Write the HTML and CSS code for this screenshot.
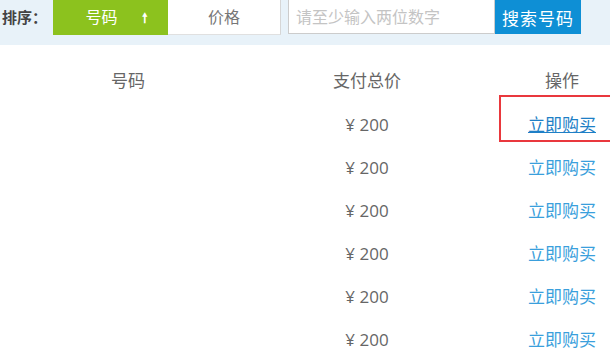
FILE: index.html
```html
<!DOCTYPE html>
<html lang="zh-CN">
<head>
	<meta charset="UTF-8">
	<title>号码列表</title>
	<link rel="stylesheet" href="styles.css">
</head>
<body>
	<div class="toolbar">
		<span class="sort-label">排序：</span>
		<a class="sort-btn active" href="#">号码<span class="arrow">&#129045;</span></a>
		<a class="sort-btn" href="#">价格</a>
		<input class="search-input" type="text" placeholder="请至少输入两位数字">
		<button class="search-btn">搜索号码</button>
	</div>
	<div class="list">
		<div class="row head">
			<div class="col-num">号码</div>
			<div class="col-price">支付总价</div>
			<div class="col-op">操作</div>
		</div>
		<div class="row">
			<div class="col-num"></div>
			<div class="col-price">¥ 200</div>
			<div class="col-op marked"><a class="buy current" href="#">立即购买</a><span class="mark"></span></div>
		</div>
		<div class="row">
			<div class="col-num"></div>
			<div class="col-price">¥ 200</div>
			<div class="col-op"><a class="buy" href="#">立即购买</a></div>
		</div>
		<div class="row">
			<div class="col-num"></div>
			<div class="col-price">¥ 200</div>
			<div class="col-op"><a class="buy" href="#">立即购买</a></div>
		</div>
		<div class="row">
			<div class="col-num"></div>
			<div class="col-price">¥ 200</div>
			<div class="col-op"><a class="buy" href="#">立即购买</a></div>
		</div>
		<div class="row">
			<div class="col-num"></div>
			<div class="col-price">¥ 200</div>
			<div class="col-op"><a class="buy" href="#">立即购买</a></div>
		</div>
		<div class="row">
			<div class="col-num"></div>
			<div class="col-price">¥ 200</div>
			<div class="col-op"><a class="buy" href="#">立即购买</a></div>
		</div>
	</div>
</body>
</html>
```
FILE: styles.css
```css
body{
	margin: 0;
	overflow: hidden;
	font-family: "Open Sans", "Noto Sans CJK SC", sans-serif;
	font-size: 17px;
	color: #555;
	background: #fff;
}
.toolbar{
	display: flex;
	align-items: flex-start;
	height: 45px;
	background: #e8f2f9;
}
.sort-label{
	width: 51px;
	padding-left: 2px;
	line-height: 35px;
	font-size: 15px;
	font-weight: bold;
	color: #444;
}
.sort-btn{
	display: block;
	box-sizing: border-box;
	height: 35px;
	line-height: 35px;
	text-align: center;
	text-decoration: none;
	color: #777;
	background: #fff;
	width: 113px;
	font-size: 16px;
	border-right: 1px solid #d6d6d6;
	border-bottom: 1px solid #e0e0e0;
}
.sort-btn.active{
	width: 115px;
	padding-left: 12px;
	color: #fff;
	background: #8cc21e;
	border: none;
}
.arrow{
	display: inline-block;
	margin-left: 24px;
	font-size: 13px;
	font-weight: bold;
}
.search-input{
	box-sizing: border-box;
	width: 207px;
	height: 34px;
	margin-left: 7px;
	padding: 0 7px;
	border: 1px solid #ccc;
	border-top: none;
	font-family: inherit;
	font-size: 16px;
	outline: none;
}
.search-input::placeholder{
	color: #c4c4c4;
}
.search-btn{
	width: 86px;
	height: 34px;
	border: none;
	background: #0e8fd5;
	color: #fff;
	font-family: inherit;
	font-size: 17px;
	letter-spacing: 1px;
}
.list{
	padding-top: 13px;
}
.row{
	display: grid;
	grid-template-columns: 256px 222px 132px;
	height: 43px;
	line-height: 43px;
	text-align: center;
}
.row.head{
	height: 45px;
	line-height: 45px;
	color: #666;
}
.col-price{
	color: #666;
}
.col-op{
	position: relative;
	padding-left: 36px;
	width: 96px;
}
.buy{
	color: #3a9fdc;
	text-decoration: none;
}
.buy.current{
	color: #1e7fc6;
	text-decoration: underline;
}
.mark{
	position: absolute;
	left: 21px;
	top: -8px;
	width: 122px;
	height: 43px;
	border: 2px solid #e9383d;
}
```
